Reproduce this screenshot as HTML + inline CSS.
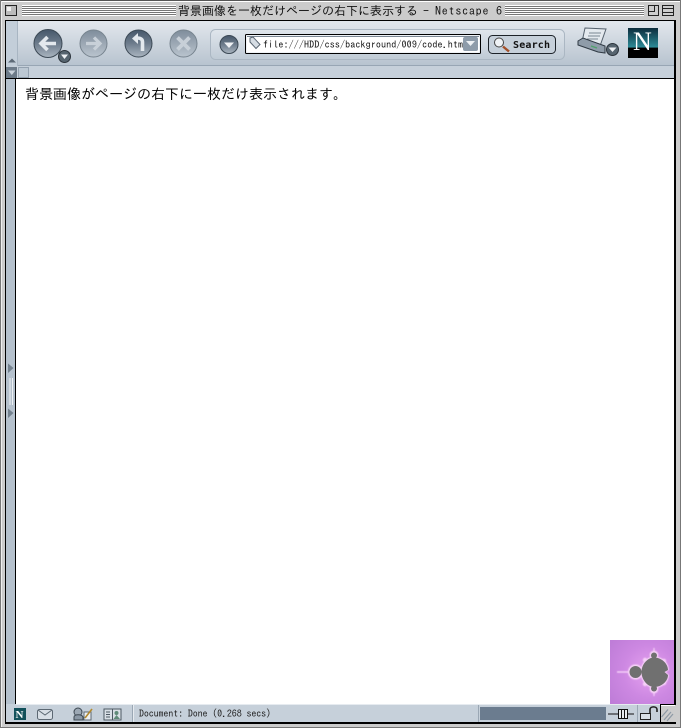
<!DOCTYPE html>
<html><head><meta charset="utf-8"><style>
html,body{margin:0;padding:0;background:#fff;width:681px;height:728px;overflow:hidden}
svg{display:block}
.j{font-family:"IPAGothic","WenQuanYi Zen Hei","Noto Sans CJK JP",sans-serif}
.m{font-family:"DejaVu Sans Mono","Liberation Mono",monospace}
</style></head><body>
<svg width="681" height="728" viewBox="0 0 681 728" xmlns="http://www.w3.org/2000/svg">
<defs>
<linearGradient id="tb" x1="0" y1="0" x2="0" y2="1"><stop offset="0" stop-color="#e2e7ed"/><stop offset="1" stop-color="#b6c2ce"/></linearGradient>
<linearGradient id="pn" x1="0" y1="0" x2="0" y2="1"><stop offset="0" stop-color="#e0e6ec"/><stop offset="1" stop-color="#bfcad5"/></linearGradient>
<linearGradient id="b1" x1="0" y1="0" x2="0" y2="1"><stop offset="0" stop-color="#46576a"/><stop offset=".5" stop-color="#6d7c8c"/><stop offset="1" stop-color="#aab5c0"/></linearGradient>
<linearGradient id="b2" x1="0" y1="0" x2="0" y2="1"><stop offset="0" stop-color="#7f8d9b"/><stop offset="1" stop-color="#bac4ce"/></linearGradient>
<linearGradient id="nl" x1="0" y1="0" x2="0" y2="1"><stop offset="0" stop-color="#0c2c3c"/><stop offset=".65" stop-color="#2d8c98"/><stop offset=".66" stop-color="#000"/><stop offset="1" stop-color="#000"/></linearGradient>
<radialGradient id="fr" cx=".62" cy=".5" r=".75"><stop offset="0" stop-color="#e6a2f0"/><stop offset=".55" stop-color="#cd88e2"/><stop offset="1" stop-color="#bf7dd8"/></radialGradient>
<pattern id="st" width="4" height="2" patternUnits="userSpaceOnUse"><rect width="4" height="1" fill="#777"/><rect y="1" width="4" height="1" fill="#fff"/></pattern>
<filter id="bl" x="-20%" y="-20%" width="140%" height="140%"><feGaussianBlur stdDeviation=".5"/></filter>
</defs>

<!-- outer frame -->
<rect width="681" height="728" fill="#ccc"/>
<rect x="0" y="0" width="681" height="1" fill="#555"/>
<rect x="0" y="1" width="681" height="1" fill="#fff"/>
<rect x="0" y="0" width="1" height="728" fill="#777"/>
<rect x="1" y="1" width="1" height="726" fill="#eee"/>
<rect x="680" y="0" width="1" height="728" fill="#777"/>
<rect x="0" y="727" width="681" height="1" fill="#777"/>

<!-- title bar -->
<rect x="5.5" y="5.5" width="11" height="10" fill="#bbb" stroke="#222"/>
<rect x="7" y="7" width="4" height="4" fill="#eee"/>
<rect x="22" y="5" width="154" height="11" fill="url(#st)"/>
<rect x="505" y="5" width="139" height="11" fill="url(#st)"/>
<text class="j" font-size="12" x="178" y="15" fill="#111">背景画像を一枚だけページの右下に表示する</text>
<text class="j" font-size="12" x="423" y="15" fill="#111">-</text>
<text class="j" font-size="12" x="435" y="15" fill="#111" textLength="67" lengthAdjust="spacing">Netscape 6</text>
<rect x="648.5" y="5.5" width="10" height="10" fill="#ccc" stroke="#222"/>
<path d="M648.5 11.5H654.5V5.5" fill="none" stroke="#222"/>
<rect x="662.5" y="5.5" width="11" height="10" fill="#ccc" stroke="#222"/>
<path d="M662.5 8.5H673.5M662.5 12.5H673.5" stroke="#222"/>

<!-- window body -->
<rect x="5" y="20" width="671" height="704" fill="#000"/>
<rect x="6" y="21" width="668" height="46" fill="url(#tb)"/>
<rect x="6" y="65" width="668" height="1" fill="#98a6b4"/>
<rect x="6" y="66" width="668" height="12" fill="#c6d0da"/>
<rect x="6" y="21" width="11" height="45" fill="#c3ced9"/>
<rect x="17" y="21" width="1" height="45" fill="#a8b5c2"/>
<path d="M8 62.5L12 58.5L16 62.5Z" fill="#5d6a77"/>
<rect x="6" y="67" width="11" height="11" fill="#6d7b89"/>
<path d="M8 70.5H15.5L11.8 75Z" fill="#c9d2db"/>
<rect x="18.5" y="67.5" width="10" height="10" fill="#bcc8d3" stroke="#94a2b0"/>

<!-- content -->
<rect x="16" y="79" width="658" height="625" fill="#fff"/>
<rect x="6" y="79" width="9" height="644" fill="#b5c1cd"/>
<path d="M8 363.5L13.5 368L8 373Z M8 408.5L13.5 413L8 418Z" fill="#74828f"/>
<rect x="9.5" y="378" width="1" height="27" fill="#eef1f4"/>
<rect x="12" y="378" width="1" height="27" fill="#eef1f4"/>
<text class="j" font-size="14" x="25" y="99" fill="#000">背景画像がページの右下に一枚だけ表示されます。</text>

<!-- mandelbrot background -->
<rect x="610" y="640" width="64" height="64" fill="url(#fr)"/>
<g filter="url(#bl)">
<path d="M617 672H630" stroke="#f8d4fa" stroke-width="1.4"/>
<circle cx="635.5" cy="672" r="7.6" fill="#f6d0f8"/>
<path d="M640.5 672C640.5 663 647 656.5 654 656.5C663 656.5 669 663 669 670L666 672L669 675C669 682 663 688 654 688C647 688 640.5 681 640.5 672Z" fill="#f6d0f8"/>
<circle cx="654" cy="655" r="4.4" fill="#f6d0f8"/>
<circle cx="654" cy="689" r="4.4" fill="#f6d0f8"/>
<path d="M654 648V652M654 692V696" stroke="#f6d0f8" stroke-width="1.2"/>
<circle cx="645" cy="660" r="2.2" fill="#f6d0f8"/>
<circle cx="645" cy="684" r="2.2" fill="#f6d0f8"/>
<circle cx="664" cy="661" r="2.2" fill="#f6d0f8"/>
<circle cx="664" cy="683" r="2.2" fill="#f6d0f8"/>
</g>
<circle cx="635.5" cy="672" r="6" fill="#707070"/>
<path d="M641.5 672C641.5 664 648 657.5 654 657.5C662 657.5 668 664 668 670L664.5 672L668 675C668 681 662 687 654 687C648 687 641.5 680 641.5 672Z" fill="#707070"/>
<circle cx="654" cy="655.5" r="3" fill="#707070"/>
<circle cx="654" cy="688.5" r="3" fill="#707070"/>

<!-- back / forward / up / stop -->
<g stroke-width="1">
<circle cx="48" cy="43.5" r="14" fill="url(#b1)" stroke="#3c4955"/>
<circle cx="93.5" cy="43.5" r="13.5" fill="url(#b2)" stroke="#77848f"/>
<circle cx="138.5" cy="43.5" r="13.5" fill="url(#b1)" stroke="#3c4955"/>
<circle cx="183.5" cy="43.5" r="13.5" fill="url(#b2)" stroke="#77848f"/>
</g>
<path d="M41 43.5H56M47.5 37L41 43.5L47.5 50" fill="none" stroke="#e3e8ed" stroke-width="3.6"/>
<path d="M86 43.5H100M94 37.5L100 43.5L94 49.5" fill="none" stroke="#c8d0d8" stroke-width="3.2"/>
<path d="M142.5 51V42C142.5 39 140.5 38 137 38" fill="none" stroke="#e3e8ed" stroke-width="3.6"/>
<path d="M138 33L132 38.5L138 44Z" fill="#e3e8ed"/>
<path d="M177.5 37.5L189.5 49.5M189.5 37.5L177.5 49.5" fill="none" stroke="#c8d0d8" stroke-width="3.8"/>
<circle cx="64.5" cy="56.5" r="6" fill="#56646f" stroke="#2c343c"/>
<path d="M61 54.5H68L64.5 59Z" fill="#eef1f4"/>

<!-- url panel -->
<rect x="210.5" y="29.5" width="354" height="30" rx="5" fill="url(#pn)" stroke="#abb7c3"/>
<circle cx="229" cy="44.5" r="9" fill="url(#b1)" stroke="#3c4955"/>
<path d="M224 42.5H234L229 48Z" fill="#eef1f4"/>
<rect x="245.5" y="34.5" width="235" height="19" rx="1" fill="#eef2f6" stroke="#000"/>
<rect x="247" y="36" width="232" height="16" fill="#fff"/>
<rect x="247" y="36" width="232" height="1" fill="#7c8895"/>
<path d="M250 38L253 37L260 44.5L256 48.5L250 42Z" fill="#d6dde4" stroke="#5a6673"/>
<text class="j" font-size="10" x="263" y="48" fill="#111" textLength="200" lengthAdjust="spacing">file:///HDD/css/background/009/code.htm</text>
<rect x="463" y="37" width="15" height="14" rx="2" fill="#8e9caa"/>
<path d="M466 41H475L470.5 46Z" fill="#eef1f4"/>
<rect x="488.5" y="35.5" width="67" height="18" rx="4" fill="#c6d0da" stroke="#1c2228"/>
<circle cx="499" cy="42.5" r="4.5" fill="#f0f3f6" stroke="#444"/>
<path d="M503 46.5L509 51.5" stroke="#a3502a" stroke-width="2.4"/>
<text class="m" font-size="10" font-weight="bold" x="513" y="48" fill="#111" textLength="37">Search</text>

<!-- printer -->
<path d="M585 28L606 29L600 46L582 42Z" fill="#e4e9ee" stroke="#55616d"/>
<path d="M589 33L601 33M588 36L600 36M587 39L598 39" stroke="#7a8692"/>
<path d="M578 41L583 38L605 46L605 53L598 52L578 45Z" fill="#8f9ca9" stroke="#303a44"/>
<path d="M591 46L597 48" stroke="#4fa36b" stroke-width="1.4"/>
<circle cx="612.5" cy="49.5" r="6" fill="#56646f" stroke="#2c343c"/>
<path d="M608.5 47.5H616.5L612.5 52Z" fill="#eef1f4"/>

<!-- N logo -->
<rect x="628" y="28" width="30" height="30" fill="url(#nl)"/>
<text font-family="'Liberation Serif',serif" font-size="26" x="633" y="50" fill="#fff">N</text>

<!-- status bar -->
<rect x="6" y="704" width="668" height="18" fill="#c6d0da"/>
<rect x="16" y="704" width="658" height="1" fill="#e6ebf0"/>
<rect x="6" y="722" width="670" height="2" fill="#000"/>
<rect x="14" y="708" width="12" height="12" fill="#11505a"/>
<text font-family="'Liberation Serif',serif" font-weight="bold" font-size="11" x="15.5" y="718" fill="#fff">N</text>
<rect x="37.5" y="709.5" width="15" height="10" rx="2" fill="#d8dfe6" stroke="#5c6873"/>
<path d="M38 710L45 715L52 710" fill="none" stroke="#5c6873"/>
<circle cx="78" cy="712" r="4" fill="#9ca8b4" stroke="#3c4751"/>
<path d="M74 717C74 714 82 714 83 717V720H74Z" fill="#8b98a5" stroke="#3c4751"/>
<rect x="84" y="712" width="7" height="8" fill="#eef1f4" stroke="#5c6873"/>
<path d="M85 718L92 709" stroke="#b38a2e" stroke-width="1.6"/>
<rect x="104" y="709" width="17" height="11" fill="#d8dfe6" stroke="#4c5863"/>
<path d="M112.5 709V720" stroke="#4c5863"/>
<circle cx="116.5" cy="713" r="2" fill="#5e8a78"/>
<path d="M113.5 719L116.5 715L120 719Z" fill="#5e8a78"/>
<path d="M106 712H110M106 714.5H110M106 717H110" stroke="#4c5863"/>
<rect x="132" y="705" width="1" height="17" fill="#9aa7b4"/>
<rect x="133" y="705" width="1" height="17" fill="#e6ebf0"/>
<text class="j" font-size="10" x="139" y="717" fill="#222" textLength="132" lengthAdjust="spacing">Document: Done (0.268 secs)</text>
<rect x="478" y="705" width="1" height="17" fill="#9aa7b4"/>
<rect x="480" y="707" width="126" height="13" fill="#6b7c8f"/>
<path d="M608 714H618M628 714H634" stroke="#111"/>
<rect x="618.5" y="709.5" width="9" height="9" fill="#e8ecf0" stroke="#111"/>
<path d="M621.5 709.5V718.5M624.5 709.5V718.5" stroke="#111"/>
<rect x="637" y="705" width="1" height="17" fill="#9aa7b4"/>
<rect x="640.5" y="713.5" width="10" height="6" fill="#d8dfe6" stroke="#222"/>
<path d="M650 713V709.5C650 706 657 706 657 709.5V712" fill="none" stroke="#222" stroke-width="1.6"/>

<rect x="674" y="21" width="2" height="684" fill="#000"/>
<!-- resize corner notch -->
<rect x="660" y="704" width="16" height="18" fill="#ccc"/>
<rect x="660" y="704" width="16" height="1" fill="#000"/>
<rect x="660" y="704" width="1" height="18" fill="#000"/>
<rect x="661" y="705" width="14" height="1" fill="#fff"/>
<path d="M664 720L671 712M667 721L673 714M661.5 717L668 709.5" stroke="#8d99a5" stroke-width="1.2"/>
</svg>
</body></html>
